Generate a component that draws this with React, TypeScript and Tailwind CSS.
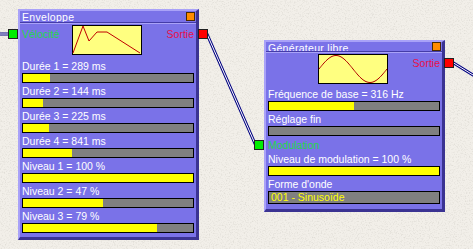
import React from "react";

/* Patch-editor style canvas: two modules wired together */

const font = { fontFamily: '"Liberation Sans", Arial, sans-serif' };

function Bar({ fill }: { fill: number }) {
  return (
    <div className="h-[10px] mx-[2px] border border-black bg-[#808080] flex">
      <div className="h-full bg-[#ffff00]" style={{ width: `${fill}%` }} />
    </div>
  );
}

function Row({ label, fill }: { label: string; fill: number }) {
  return (
    <div className="h-[25px] flex flex-col">
      <div className="h-[14px] leading-[14px] pl-[2px] text-white whitespace-nowrap">{label}</div>
      <Bar fill={fill} />
    </div>
  );
}

function Port({ color, side }: { color: string; side: "left" | "right" }) {
  return (
    <div
      className={`absolute top-[5px] w-[10px] h-[10px] border border-[#202020] ${color} ${
        side === "left" ? "-left-[12px]" : "-right-[12px]"
      }`}
    />
  );
}

function Panel({
  title,
  className,
  titleClass,
  children,
}: {
  title: string;
  className: string;
  titleClass: string;
  children: React.ReactNode;
}) {
  return (
    <div
      className={`absolute w-[181px] flex flex-col bg-[#7a72e8] border-t-2 border-l-2 border-b-[3px] border-r-[3px] border-t-[#a9a2f8] border-l-[#a9a2f8] border-b-[#3b3392] border-r-[#3b3392] text-[10.5px] ${className}`}
      style={font}
    >
      <div className={`flex items-end justify-between pl-[2px] pr-[1px] ${titleClass}`}>
        <span className="self-start leading-[12px] text-white tracking-[0.3px]">{title}</span>
        <div className="w-[9px] h-[9px] bg-[#ff8c00] border border-[#4a2a00]" />
      </div>
      <div className="h-[1px] bg-[#443ca8]" />
      <div className="h-[1px] bg-[#a9a2f8]" />
      {children}
    </div>
  );
}

function EnvelopeGraph() {
  return (
    <svg width="70" height="30" className="block">
      <rect x="0.5" y="0.5" width="69" height="29" fill="#ffff80" stroke="#000" />
      <polyline points="1,28 11,1 17,16 25,7 35,7 68,28" fill="none" stroke="#c00000" strokeWidth="1" />
    </svg>
  );
}

function SineGraph() {
  const pts: string[] = [];
  for (let x = 1; x <= 69; x++) {
    const y = 15 - 13.5 * Math.sin(((x - 1) / 68) * Math.PI * 2);
    pts.push(`${x},${y.toFixed(2)}`);
  }
  return (
    <svg width="70" height="30" className="block">
      <rect x="0.5" y="0.5" width="69" height="29" fill="#ffff80" stroke="#000" />
      <polyline points={pts.join(" ")} fill="none" stroke="#b00000" strokeWidth="1" />
    </svg>
  );
}

export default function App() {
  return (
    <div className="relative w-[473px] h-[249px] overflow-hidden bg-[#f2efe9]">
      {/* stucco wall texture */}
      <svg className="absolute inset-0" width="473" height="249">
        <filter id="stucco">
          <feTurbulence type="fractalNoise" baseFrequency="0.75" numOctaves="3" seed="7" />
          <feColorMatrix values="0 0 0 0 0.64  0 0 0 0 0.62  0 0 0 0 0.57  1.5 0 0 0 -0.72" />
        </filter>
        <rect width="473" height="249" filter="url(#stucco)" />
      </svg>

      {/* wires */}
      <svg className="absolute inset-0" width="473" height="249">
        <g fill="none" strokeLinecap="square">
          <path d="M0 34 H9 M207 34 L256 146 M452 62 L473 75" stroke="#000080" strokeWidth="3" />
          <path d="M0 34 H9 M207 34 L256 146 M452 62 L473 75" stroke="#ffffff" strokeWidth="1" />
        </g>
      </svg>

      <Panel title="Enveloppe" className="left-[18px] top-[9px] h-[231px]" titleClass="h-[11px] pb-[1px]">
        <div className="relative h-[35px] flex items-start">
          <Port color="bg-[#00ee00]" side="left" />
          <Port color="bg-[#ff0000]" side="right" />
          <span className="absolute left-[2px] top-[3px] leading-[14px] text-[#22d84a]">Vélocité</span>
          <div className="ml-[52px] mt-[1px]">
            <EnvelopeGraph />
          </div>
          <span className="absolute right-[2px] top-[3px] leading-[14px] text-[#e8104a]">Sortie</span>
        </div>
        <Row label="Durée 1 = 289 ms" fill={16} />
        <Row label="Durée 2 = 144 ms" fill={12} />
        <Row label="Durée 3 = 225 ms" fill={15} />
        <Row label="Durée 4 = 841 ms" fill={29} />
        <Row label="Niveau 1 = 100 %" fill={100} />
        <Row label="Niveau 2 = 47 %" fill={47} />
        <Row label="Niveau 3 = 79 %" fill={79} />
      </Panel>

      <Panel title="Générateur libre" className="left-[264px] top-[40px] h-[172px]" titleClass="h-[9px]">
        <div className="relative h-[34px] flex items-start">
          <Port color="bg-[#ff0000]" side="right" />
          <div className="ml-[52px] mt-[1px]">
            <SineGraph />
          </div>
          <span className="absolute right-[2px] top-[3px] leading-[14px] text-[#e8104a]">Sortie</span>
        </div>
        <Row label="Fréquence de base = 316 Hz" fill={50} />
        <Row label="Réglage fin" fill={0} />
        <div className="relative h-[14px] mt-[1px] leading-[14px] pl-[2px] text-[#22d84a]">
          <div className="absolute -left-[12px] top-[2px] w-[10px] h-[10px] border border-[#202020] bg-[#00ee00]" />
          Modulation
        </div>
        <Row label="Niveau de modulation = 100 %" fill={100} />
        <div className="h-[14px] leading-[14px] pl-[2px] text-white">Forme d'onde</div>
        <div className="h-[13px] mx-[2px] border border-black bg-[#808080] leading-[11px] pl-[2px] text-[#ffff00]">
          001 - Sinusoïde
        </div>
      </Panel>
    </div>
  );
}
